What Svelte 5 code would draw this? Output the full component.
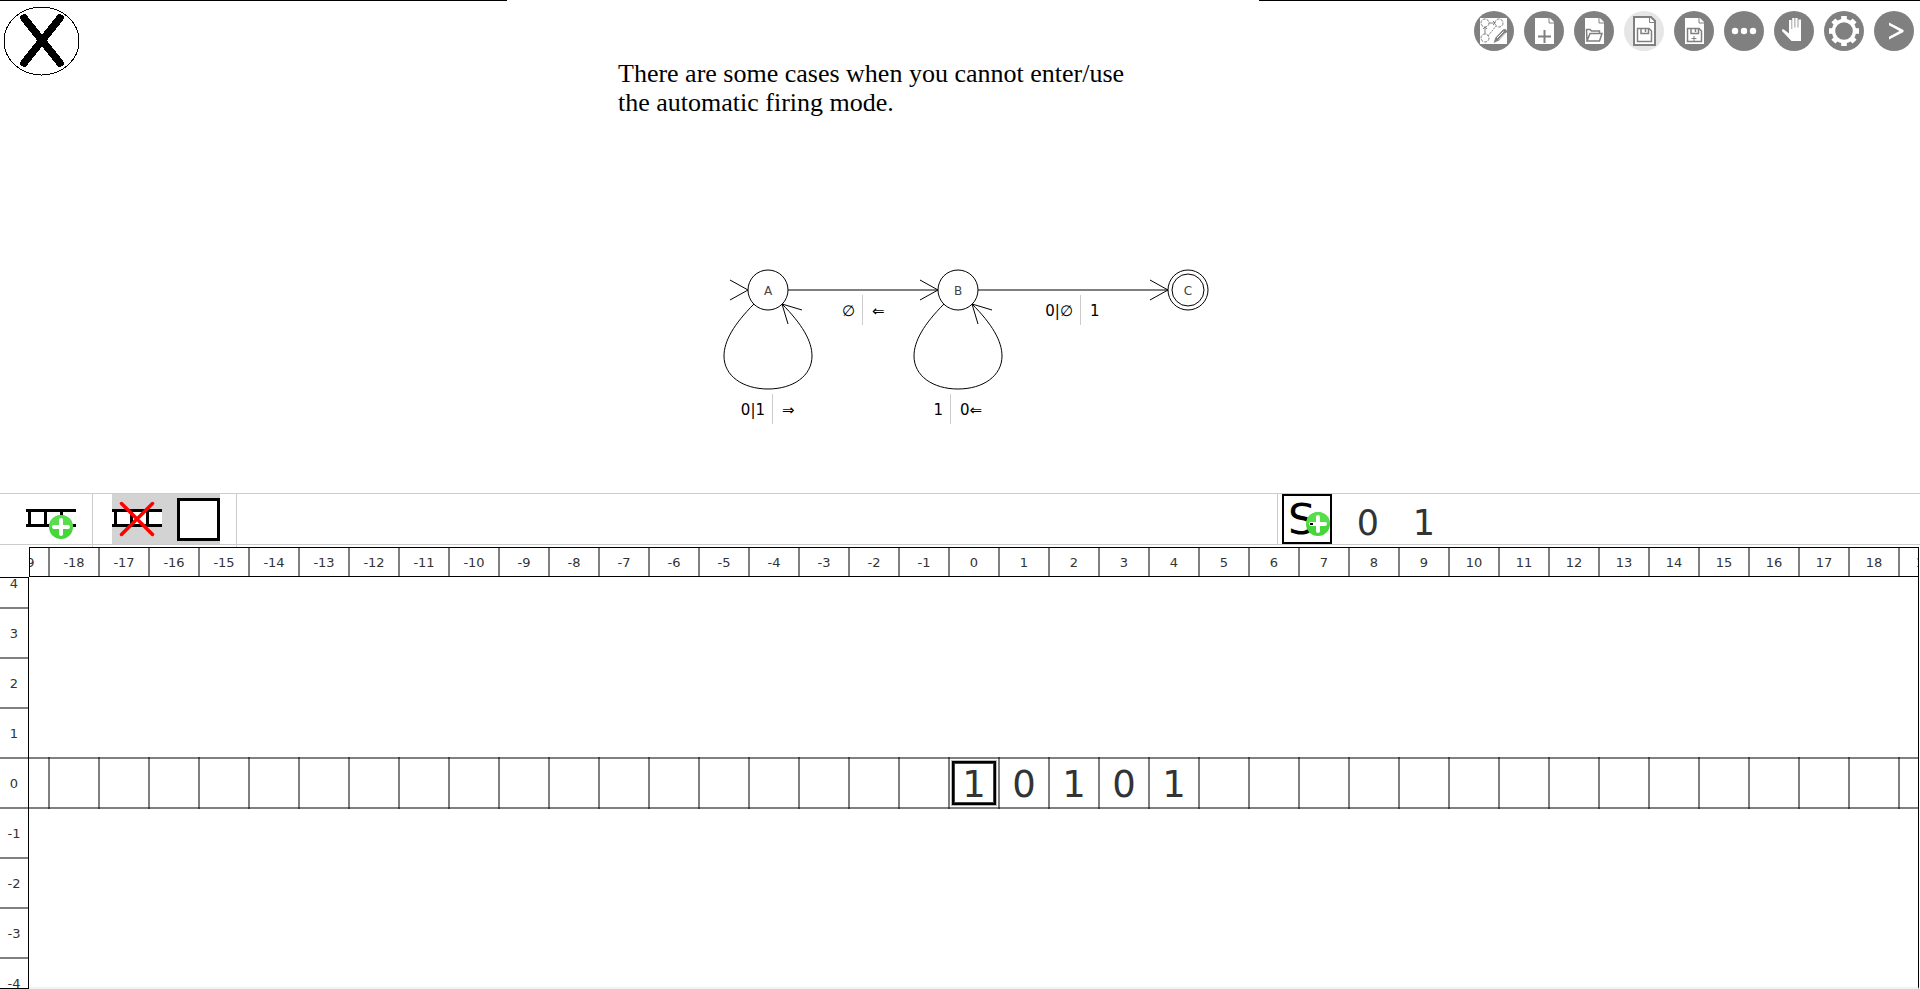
<script>
  const columns = Array.from({ length: 39 }, (_, i) => i - 19);
  const rows = Array.from({ length: 9 }, (_, i) => 4 - i);
  const tape = { 0: '1', 1: '0', 2: '1', 3: '0', 4: '1' };
  const teeth = [0, 45, 90, 135, 180, 225, 270, 315];
  const states = [
    { name: 'A', x: 768, loop: true },
    { name: 'B', x: 958, loop: true },
    { name: 'C', x: 1188, loop: false }
  ];
  const labels = [
    { x: 772, y: 394, read: '0|1', write: '⇒' },
    { x: 862, y: 295, read: '∅', write: '⇐' },
    { x: 950, y: 394, read: '1', write: '0⇐' },
    { x: 1080, y: 295, read: '0|∅', write: '1' }
  ];
</script>

{#snippet page()}
  <path d="M11 7H26L30 11V33H11Z" fill="#fff" />
  <path d="M25 7V12H30" fill="none" stroke="#808080" />
{/snippet}

{#snippet floppy()}
  <path d="M13.5 17.5H25L27.5 20V30.5H13.5Z M17 17.5V22.5H24.5V17.5 M21.5 18V21" fill="none" stroke="#808080" stroke-width="1.5" />
{/snippet}

{#snippet plus(x, y)}
  <circle cx={x} cy={y} r="12" fill="#46d63a" />
  <path d="M{x - 12} {y}a12 12 0 0 1 24 0z" fill="#56de4c" />
  <path d="M{x} {y - 7}v14M{x - 7} {y}h14" stroke="#fff" stroke-width="4" stroke-linecap="round" />
{/snippet}

<div class="app">
  <section class="stage">
    <div class="side">
      <button class="close" aria-label="Close">
        <svg width="77" height="70" shape-rendering="crispEdges">
          <ellipse cx="38.5" cy="35" rx="37.5" ry="34" fill="#fff" stroke="#000" />
          <path d="M21 12L57 57M57 12L21 57" stroke="#000" stroke-width="7.5" stroke-linecap="round" />
        </svg>
      </button>
    </div>
    <p class="message">There are some cases when you cannot enter/use<br />the automatic firing mode.</p>
    <nav class="side tools">
      <button aria-label="Edit mode">
        <svg viewBox="0 0 40 40">
          <rect x="6" y="7" width="27" height="26" fill="#fff" />
          <g fill="none" stroke="#808080" stroke-width="1">
            <circle cx="11" cy="12" r="4" stroke-dasharray="3 1" /><circle cx="25" cy="12" r="4" stroke-dasharray="3 1" /><circle cx="11" cy="27" r="4" stroke-dasharray="3 1" />
            <path d="M15 12H21M19 10L21 12L19 14M11 23V16M9 18L11 16L13 18" />
            <path d="M14 25L22 15" stroke-dasharray="2 1" />
          </g>
          <path d="M19.5 32L21.5 26.5L29 18.5Q32 17 33 20V21L25 29.5Z" fill="#808080" />
          <path d="M23 27L29.5 20.5M25 28.5L31.5 22" stroke="#fff" stroke-width="1" />
        </svg>
      </button>
      <button aria-label="New">
        <svg viewBox="0 0 40 40">
          {@render page()}
          <path d="M20.5 19V32M14 25.5H27" stroke="#808080" stroke-width="2" />
        </svg>
      </button>
      <button aria-label="Open">
        <svg viewBox="0 0 40 40">
          {@render page()}
          <path d="M13 30L12.5 18.5H16L17.5 20H25.5V22.5M13 30L16 22.5H28L25.5 30Z" fill="none" stroke="#808080" stroke-width="1.5" />
        </svg>
      </button>
      <button class="off" aria-label="Save" disabled>
        <svg viewBox="0 0 40 40">
          <path d="M10 6H27L31 10V34H10Z" fill="#fff" stroke="#808080" stroke-width="2" />
          <path d="M25.5 6V11.5H31" fill="none" stroke="#808080" />
          {@render floppy()}
        </svg>
      </button>
      <button aria-label="Save as">
        <svg viewBox="0 0 40 40">
          {@render page()}
          {@render floppy()}
          <path d="M20 25V30M17.5 27.5H22.5" stroke="#808080" />
        </svg>
      </button>
      <button aria-label="More">
        <svg viewBox="0 0 40 40" fill="#fff"><circle cx="11" cy="20" r="3.2" /><circle cx="20" cy="20" r="3.2" /><circle cx="29" cy="20" r="3.2" /></svg>
      </button>
      <button aria-label="Move">
        <svg viewBox="0 0 40 40" fill="#fff">
          <path d="M15 9H17.5V18H18.2V7H20.5V16.5H21.3V7H23.6V16.5H24.4V8.5H27V30H17.5L8 20Q7.5 18 9.5 18.2L15 22.5Z" />
        </svg>
      </button>
      <button aria-label="Settings">
        <svg viewBox="0 0 40 40">
          <circle cx="20" cy="20" r="10.5" fill="none" stroke="#fff" stroke-width="3.4" />
          {#each teeth as angle}
            <path d="M17.2 5H22.8V9H17.2Z" fill="#fff" transform="rotate({angle} 20 20)" />
          {/each}
        </svg>
      </button>
      <button aria-label="Console">
        <svg viewBox="0 0 40 40"><path d="M15 11.5V14.3L25.5 20L15 25.700V28.500L29.500 21V19Z" fill="#fff" /></svg>
      </button>
    </nav>

    <svg class="diagram" width="520" height="190" viewBox="700 250 520 190">
      <g fill="none" stroke="#000">
        <path d="M788 290H938M978 290H1168" />
        {#each states as s}
          <path d="M{s.x - 38} 280L{s.x - 20} 290L{s.x - 38} 300" />
          <circle cx={s.x} cy="290" r="20" />
          {#if s.loop}
            <g transform="translate({s.x} 0)">
              <path d="M-14 304C-34 324 -44 341 -44 356C-44 376 -25 389 0 389C25 389 44 376 44 356C44 341 34 324 14 304" />
              <path d="M34 310L14 304L20 324" />
            </g>
          {:else}
            <circle cx={s.x} cy="290" r="16" />
          {/if}
        {/each}
      </g>
      {#each states as s}
        <text class="state" x={s.x} y="295">{s.name}</text>
      {/each}
      {#each labels as l}
        <rect x={l.x} y={l.y} width="1" height="30" fill="#ccc" />
        <text class="rule read" x={l.x - 7} y={l.y + 21}>{l.read}</text>
        <text class="rule" x={l.x + 10} y={l.y + 21}>{l.write}</text>
      {/each}
    </svg>
  </section>

  <section class="bar">
    <div class="tapes">
      <div class="group first">
        <button aria-label="Add tape">
          <svg width="50" height="50">
            <path d="M0 16.5H50M0 31.5H50M3.5 15V33M19.5 15V33M35.5 15V33" stroke="#000" stroke-width="3" />
            {@render plus(35, 33)}
          </svg>
        </button>
      </div>
      <div class="group">
        <div class="shaded">
          <button aria-label="Remove tape">
            <svg width="50" height="50">
              <rect y="15" width="50" height="18" fill="#fff" />
              <path d="M0 16.5H50M0 31.5H50M3.5 15V33M19.5 15V33M35.5 15V33" stroke="#000" stroke-width="3" />
              <path d="M9.5 9.5L40.5 40.5M40.5 9.5L9.5 40.5" stroke="#f00" stroke-width="3.5" stroke-linecap="round" />
            </svg>
          </button>
          <button aria-label="Head">
            <svg width="50" height="50"><rect x="8.5" y="5.5" width="40" height="40" fill="#fff" stroke="#000" stroke-width="3" /></svg>
          </button>
        </div>
      </div>
    </div>
    <div class="symbols">
      <button aria-label="Add symbol">
        <svg width="50" height="50">
          <rect x="1" y="1" width="48" height="48" fill="#fff" stroke="#000" stroke-width="2" />
          <text class="glyph" x="6" y="40">S</text>
          {@render plus(36, 30)}
          <path d="M28 30h3" stroke="#000" stroke-width="2" />
        </svg>
      </button>
      <button class="symbol">0</button>
      <button class="symbol">1</button>
    </div>
  </section>

  <section class="board">
    <div class="columns">
      {#each columns as c}<span>{c}</span>{/each}
    </div>
    <div class="rows">
      {#each rows as r}<span>{r}</span>{/each}
    </div>
    <div class="area">
      <div class="tape">
        {#each columns as c}
          <div class="cell"><span class:head={c === 0}>{tape[c] ?? ''}</span></div>
        {/each}
      </div>
    </div>
  </section>
</div>

<style>
  :global(body) { margin: 0; background: #fff; }
  .app {
    height: 100vh;
    display: flex;
    flex-direction: column;
    overflow: hidden;
    font-family: "DejaVu Sans", sans-serif;
    color: #333;
  }
  button {
    padding: 0;
    border: 0;
    background: none;
    font: inherit;
    color: inherit;
    cursor: pointer;
  }
  svg { display: block; }

  .stage {
    flex: 1 1 493px;
    min-height: 0;
    display: grid;
    grid-template-columns: 507fr 752fr 661fr;
    grid-template-rows: 250px auto;
  }
  .side { border-top: 1px solid #000; }
  .close { margin: 5px 0 0 3px; }
  .message {
    margin: 0;
    padding: 59px 0 0 111px;
    font: 26px/29px "Liberation Serif", serif;
    color: #000;
    white-space: nowrap;
  }
  .tools {
    display: flex;
    justify-content: flex-end;
    align-items: flex-start;
    gap: 10px;
    padding: 10px 6px 0 0;
  }
  .tools button {
    width: 40px;
    height: 40px;
    border-radius: 50%;
    background: #808080;
  }
  .tools .off { background: #e6e6e6; }
  .diagram { grid-column: 1 / -1; justify-self: center; }
  .state { font-size: 12px; fill: #444; text-anchor: middle; }
  .rule { font-size: 15px; fill: #000; }
  .read { text-anchor: end; }

  .bar {
    flex: none;
    display: grid;
    grid-template-columns: 1277fr 643fr;
    height: 50px;
    border-top: 1px solid #ccc;
    border-bottom: 1px solid #ccc;
  }
  .tapes, .symbols, .shaded { display: flex; }
  .group { padding: 0 16px 0 19px; border-right: 1px solid #ccc; }
  .first { padding-left: 26px; padding-right: 16px; }
  .shaded { gap: 8px; background: #d3d3d3; }
  .symbols {
    align-items: flex-start;
    height: 50px;
    border-left: 1px solid #ccc;
    padding-left: 4px;
  }
  .glyph { font-size: 43px; fill: #000; }
  .symbol { width: 56px; font-size: 35px; line-height: 58px; }
  .symbols button:first-child { margin-right: 8px; }

  .board {
    flex: 1 1 442px;
    min-height: 0;
    display: grid;
    grid-template-columns: 29px 1fr;
    grid-template-rows: 30px 1fr;
    padding: 2px 1px 0 0;
    font-size: 13px;
  }
  .columns, .rows, .tape { display: flex; justify-content: center; overflow: hidden; }
  .columns { grid-column: 2; border: 1px solid #000; }
  .columns span, .cell {
    flex: 0 0 50px;
    box-sizing: border-box;
    border: solid rgba(0, 0, 0, 0.5);
    border-width: 0 1px;
    text-align: center;
    line-height: 30px;
  }
  .rows {
    flex-direction: column;
    min-height: 0;
    border: solid #000;
    border-width: 1px 1px 1px 0;
  }
  .rows span {
    flex: 0 0 50px;
    min-height: 0;
    box-sizing: border-box;
    border: solid #808080;
    border-width: 1px 0;
    text-align: center;
    line-height: 50px;
  }
  .area {
    display: flex;
    flex-direction: column;
    justify-content: center;
    min-width: 0;
    min-height: 0;
    padding-top: 2px;
    border-right: 1px solid #000;
    border-bottom: 2px solid #f2f2f2;
  }
  .tape {
    flex: none;
    padding-left: 1px;
    background:
      linear-gradient(#808080, #808080) top / 100% 2px no-repeat,
      linear-gradient(#808080, #808080) bottom / 100% 2px no-repeat;
  }
  .cell {
    display: flex;
    align-items: center;
    justify-content: center;
    height: 52px;
    font-size: 37px;
  }
  .cell span {
    box-sizing: border-box;
    width: 46px;
    height: 46px;
    border: 1px solid transparent;
    line-height: 48px;
  }
  .cell .head { border-color: #bbb; box-shadow: inset 0 0 0 2px #000, inset 0 0 0 3px #444; }
</style>
